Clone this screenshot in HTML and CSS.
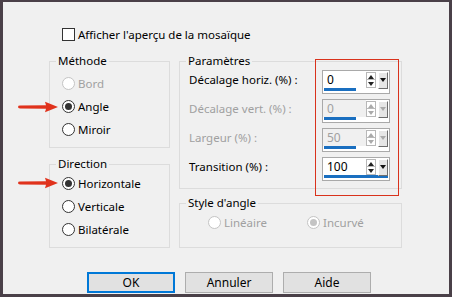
FILE: index.html
```html
<!DOCTYPE html>
<html>
<head>
	<title>Mosaïque</title>
	<link rel="stylesheet" href="styles.css">
</head>
<body>
	<div class="dialog">
		<label class="check-row"><span class="checkbox"></span>Afficher l'aperçu de la mosaïque</label>

		<div class="main">
			<div class="col-left">
				<fieldset class="group methode">
					<legend>Méthode</legend>
					<div class="radio disabled"><span class="dot"></span>Bord</div>
					<div class="radio checked"><span class="dot"></span>Angle</div>
					<div class="radio"><span class="dot"></span>Miroir</div>
				</fieldset>
				<fieldset class="group direction">
					<legend>Direction</legend>
					<div class="radio checked"><span class="dot"></span>Horizontale</div>
					<div class="radio"><span class="dot"></span>Verticale</div>
					<div class="radio"><span class="dot"></span>Bilatérale</div>
				</fieldset>
			</div>

			<div class="col-right">
				<fieldset class="group params">
					<legend>Paramètres</legend>
					<div class="param">
						<span class="param-label">Décalage horiz. (%) :</span>
						<div class="spin">
							<div class="spin-top">
								<span class="val">0</span>
								<span class="updown"><i class="up"></i><i class="down"></i></span>
								<span class="drop"><i></i></span>
							</div>
							<div class="bar" style="width:32px"></div>
						</div>
					</div>
					<div class="param disabled">
						<span class="param-label">Décalage vert. (%) :</span>
						<div class="spin">
							<div class="spin-top">
								<span class="val">0</span>
								<span class="updown"><i class="up"></i><i class="down"></i></span>
								<span class="drop"><i></i></span>
							</div>
							<div class="bar" style="width:32px"></div>
						</div>
					</div>
					<div class="param disabled">
						<span class="param-label">Largeur (%) :</span>
						<div class="spin">
							<div class="spin-top">
								<span class="val">50</span>
								<span class="updown"><i class="up"></i><i class="down"></i></span>
								<span class="drop"><i></i></span>
							</div>
							<div class="bar" style="width:32px"></div>
						</div>
					</div>
					<div class="param">
						<span class="param-label">Transition (%) :</span>
						<div class="spin">
							<div class="spin-top">
								<span class="val">100</span>
								<span class="updown"><i class="up"></i><i class="down"></i></span>
								<span class="drop"><i></i></span>
							</div>
							<div class="bar" style="width:64px"></div>
						</div>
					</div>
				</fieldset>
				<fieldset class="group style">
					<legend>Style d'angle</legend>
					<div class="radio-row">
						<div class="radio disabled linear"><span class="dot"></span>Linéaire</div>
						<div class="radio disabled checked"><span class="dot"></span>Incurvé</div>
					</div>
				</fieldset>
			</div>
		</div>

		<div class="buttons">
			<button class="btn default">OK</button>
			<button class="btn">Annuler</button>
			<button class="btn">Aide</button>
		</div>

		<!-- annotations -->
		<div class="highlight"></div>
		<svg class="arrow arrow-1" width="42" height="12" viewBox="0 0 42 12">
			<path d="M1 6 Q1 4.6 3 4.6 L29 4.2 L28 0.8 L41 6 L28 11.2 L29 7.8 L3 7.4 Q1 7.4 1 6 Z" fill="#e0321c"/>
		</svg>
		<svg class="arrow arrow-2" width="42" height="12" viewBox="0 0 42 12">
			<path d="M1 6 Q1 4.6 3 4.6 L29 4.2 L28 0.8 L41 6 L28 11.2 L29 7.8 L3 7.4 Q1 7.4 1 6 Z" fill="#e0321c"/>
		</svg>
	</div>
</body>
</html>
```

FILE: styles.css
```css
* {
	margin: 0px;
	padding: 0px;
	box-sizing: border-box;
}

body {
	font-family: "Noto Sans", "Open Sans", sans-serif;
	font-size: 11.5px;
	color: #000;
}

.dialog {
	position: relative;
	width: 452px;
	height: 297px;
	background: #f0f0f0;
	border: 3px solid #4a4048;
	border-top-width: 2px;
	padding: 26px 0 0 46px;
}

.check-row {
	display: flex;
	align-items: center;
	height: 13px;
	margin-left: 13px;
	gap: 3px;
}

.checkbox {
	width: 13px;
	height: 13px;
	border: 1px solid #333;
	background: #fff;
}

.main {
	display: flex;
	gap: 9px;
	margin-top: 12px;
}

.col-left {
	width: 121px;
	display: flex;
	flex-direction: column;
	gap: 8px;
}

.col-right {
	width: 223px;
	display: flex;
	flex-direction: column;
	gap: 6px;
}

.group {
	border: 1px solid #dcdcdc;
}

.group legend {
	margin-left: 6px;
	padding: 0 2px;
	line-height: 16px;
}

.methode {
	padding: 3px 0 6px 0;
}

.direction {
	padding: 0 0 6px 0;
}

.methode .radio,
.direction .radio {
	margin-left: 12px;
}

.radio {
	display: flex;
	align-items: center;
	gap: 3px;
	height: 23px;
}

.radio .dot {
	position: relative;
	width: 13px;
	height: 13px;
	border: 1px solid #333;
	border-radius: 50%;
	background: #fff;
}

.radio.checked .dot::after {
	content: "";
	position: absolute;
	left: 2px;
	top: 2px;
	width: 7px;
	height: 7px;
	border-radius: 50%;
	background: #333;
}

.radio.disabled {
	color: #a0a0a0;
}

.radio.disabled .dot {
	border-color: #c4c4c4;
}

.radio.disabled.checked .dot::after {
	background: #c4c4c4;
}

.params {
	padding: 1px 0 8px 0;
	display: flex;
	flex-direction: column;
	gap: 6px;
}

.param {
	display: flex;
	align-items: center;
	height: 23px;
	margin-left: 9px;
}

.param-label {
	width: 133px;
	margin-top: -4px;
}

.param.disabled .param-label {
	color: #a0a0a0;
}

.spin {
	width: 68px;
	height: 24px;
	border: 1px solid #a9a9a9;
	background: #fff;
}

.spin-top {
	display: flex;
	height: 17px;
}

.spin .val {
	width: 43px;
	padding-left: 4px;
	line-height: 17px;
	font-size: 12px;
}

.param.disabled .val {
	background: #f0f0f0;
	color: #a0a0a0;
}

.updown {
	display: flex;
	flex-direction: column;
	width: 10px;
	height: 16px;
	margin-top: 1px;
	border: 1px solid #b8b8b8;
	background: #fff;
}

.updown i {
	flex: 1;
	position: relative;
}

.updown .up {
	border-bottom: 1px solid #b8b8b8;
}

.updown i::after {
	content: "";
	position: absolute;
	left: 1px;
	border-left: 3px solid transparent;
	border-right: 3px solid transparent;
}

.updown .up::after {
	top: 2px;
	border-bottom: 4px solid #222;
}

.updown .down::after {
	top: 2px;
	border-top: 4px solid #222;
}

.drop {
	position: relative;
	width: 10px;
	height: 17px;
	margin: 1px 0 0 2px;
	background: #e6e6e6;
	border-left: 1px solid #fff;
	border-top: 1px solid #fff;
	border-right: 1px solid #6e6e6e;
	border-bottom: 1px solid #6e6e6e;
}

.drop i {
	position: absolute;
	left: 1px;
	top: 5px;
	border-left: 3px solid transparent;
	border-right: 3px solid transparent;
	border-top: 4px solid #111;
}

.param.disabled .updown i::after {
	border-top-color: #aaa;
	border-bottom-color: #aaa;
}

.param.disabled .updown .up::after {
	border-top-color: transparent;
}

.param.disabled .updown .down::after {
	border-bottom-color: transparent;
}

.param.disabled .drop i {
	border-top-color: #aaa;
}

.bar {
	height: 3px;
	margin-left: 1px;
	background: #1a6fc0;
}

.style {
	padding: 0 0 13px 0;
}

.radio-row {
	display: flex;
	margin-left: 28px;
}

.radio.linear {
	width: 99px;
}

.buttons {
	display: flex;
	gap: 10px;
	margin: 24px 0 0 38px;
}

.btn {
	width: 88px;
	height: 21px;
	font-family: inherit;
	font-size: 12px;
	background: #e1e1e1;
	border: 1px solid #adadad;
	color: #000;
}

.btn.default {
	border-color: #0078d7;
	box-shadow: inset 0 0 0 1px #0078d7;
}

.highlight {
	position: absolute;
	left: 312px;
	top: 57px;
	width: 84px;
	height: 137px;
	border: 1px solid #d9321c;
}

.arrow {
	position: absolute;
	left: 14px;
}

.arrow-1 {
	top: 99px;
}

.arrow-2 {
	top: 175px;
}
```
